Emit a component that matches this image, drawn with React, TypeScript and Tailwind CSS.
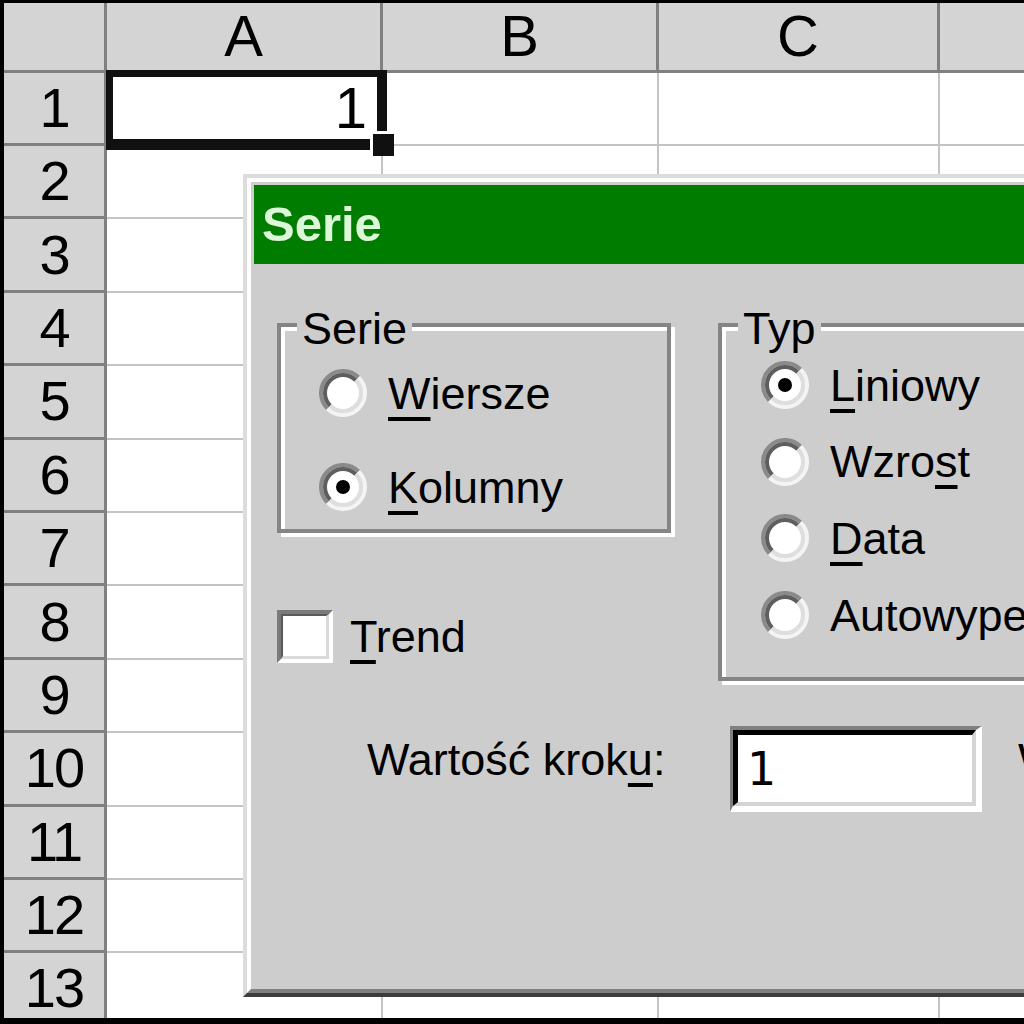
import type { ReactNode } from 'react'

const cols = [
	{ label: 'A', w: 'w-[276px]' },
	{ label: 'B', w: 'w-[276px]' },
	{ label: 'C', w: 'w-[281px]' },
	{ label: '', w: 'w-[277px]' },
]

const rows = [1, 2, 3, 4, 5, 6, 7, 8, 9, 10, 11, 12, 13]

const Key = ({ children }: { children: ReactNode }) => (
	<u className="underline decoration-[4px] underline-offset-[8px]">{children}</u>
)

const RadioDot = ({ checked }: { checked?: boolean }) => (
	<svg width="48" height="48" viewBox="0 0 48 48" className="flex-none">
		<circle cx="24" cy="24" r="20" fill="#fff" />
		<path d="M8.44 39.56 A22 22 0 0 1 39.56 8.44" fill="none" stroke="#8a8a8a" strokeWidth="4" />
		<path d="M39.56 8.44 A22 22 0 0 1 8.44 39.56" fill="none" stroke="#f4f4f4" strokeWidth="4" />
		<path d="M11.27 36.73 A18 18 0 0 1 36.73 11.27" fill="none" stroke="#5e5e5e" strokeWidth="4" />
		<path d="M36.73 11.27 A18 18 0 0 1 11.27 36.73" fill="none" stroke="#dedede" strokeWidth="4" />
		{checked && <circle cx="24" cy="24" r="7" fill="#000" />}
	</svg>
)

const Radio = ({ checked, children }: { checked?: boolean; children: ReactNode }) => (
	<div className="flex h-[48px] items-center">
		<RadioDot checked={checked} />
		<span className="ml-[21px] whitespace-nowrap text-[45px] leading-none">{children}</span>
	</div>
)

const Group = ({ legend, className, children }: { legend: string; className: string; children: ReactNode }) => (
	<div
		className={`relative flex-none border-4 border-[#858585] shadow-[inset_4px_4px_0_#fff,4px_4px_0_#fff] ${className}`}
	>
		<span className="absolute left-[16px] top-[-21px] bg-[#cdcdcd] px-[5px] text-[45px] leading-none">
			{legend}
		</span>
		{children}
	</div>
)

export default function App() {
	return (
		<div className="relative h-[1024px] w-[1024px] overflow-hidden border-b-[6px] border-l-4 border-t-[3px] border-black bg-white font-['Liberation_Sans',Arial,sans-serif] text-black">
			{/* column headers */}
			<div className="flex h-[69.6px] border-b-[3px] border-[#808080] bg-[#d4d4d4]">
				<div className="w-[103px] flex-none border-r-[3px] border-[#808080]" />
				{cols.map((c, i) => (
					<div
						key={i}
						className={`${c.w} flex flex-none items-center justify-center border-r-[3px] border-[#808080] text-[58px] leading-none`}
					>
						{c.label}
					</div>
				))}
			</div>

			{/* rows */}
			{rows.map((r) => (
				<div key={r} className="flex h-[73.4px]">
					<div className="flex w-[103px] flex-none items-center justify-center border-b-[3px] border-r-[3px] border-[#808080] bg-[#d4d4d4] text-[56px] leading-none tracking-[-2px]">
						{r}
					</div>
					{cols.map((c, i) => (
						<div
							key={i}
							className={`${c.w} flex flex-none items-center justify-end border-b-2 border-r-2 border-[#c4c4c4] pr-[14px] text-[58px] leading-none`}
						>
							{r === 1 && i === 0 ? '1' : ''}
						</div>
					))}
				</div>
			))}

			{/* active cell */}
			<div className="absolute left-[102px] top-[67px] h-[80px] w-[281px] border-b-[11px] border-l-[7px] border-r-[10px] border-t-[7px] border-[#101010]" />
			<div className="absolute left-[366px] top-[128px] h-[25px] w-[24px] border-l-[3px] border-t-[3px] border-white bg-[#101010]" />

			{/* Serie dialog */}
			<div className="absolute left-[239px] top-[171px] h-[823px] w-[900px] border-b-4 border-l-4 border-t-4 border-[#dcdcdc] border-b-[#3c3c3c] bg-[#cdcdcd]">
				<div className="flex h-full flex-col border-b-4 border-l-4 border-t-4 border-white border-b-[#808080] p-[3px] pr-0">
					<div className="flex h-[79px] flex-none items-center bg-[#007c00] pl-[8px] text-[49px] font-bold leading-none text-[#dcf8d8]">
						Serie
					</div>

					<div className="flex flex-1 flex-col pl-[23px] pt-[59px]">
						<div className="flex items-start">
							<div className="flex flex-none flex-col">
								<Group legend="Serie" className="h-[210px] w-[394px] pl-[38px] pt-[42px]">
									<div className="flex flex-col gap-[46px]">
										<Radio>
											<Key>W</Key>iersze
										</Radio>
										<Radio checked>
											<Key>K</Key>olumny
										</Radio>
									</div>
								</Group>

								<div className="mt-[77px] flex items-center">
									<div className="h-[53px] w-[56px] flex-none border-b-4 border-l-4 border-r-4 border-t-4 border-[#7a7a7a] border-b-white border-r-white">
										<div className="h-full w-full border-b-[3px] border-l-2 border-r-[3px] border-t-2 border-[#5a5a5a] border-b-[#dadada] border-r-[#dadada] bg-white" />
									</div>
									<span className="ml-[17px] text-[45px] leading-none">
										<Key>T</Key>rend
									</span>
								</div>
							</div>

							<Group legend="Typ" className="ml-[47px] h-[358px] w-[420px] pl-[39px] pt-[34px]">
								<div className="flex flex-col gap-[28.7px]">
									<Radio checked>
										<Key>L</Key>iniowy
									</Radio>
									<Radio>
										Wzro<Key>s</Key>t
									</Radio>
									<Radio>
										<Key>D</Key>ata
									</Radio>
									<Radio>Autowypełnianie</Radio>
								</div>
							</Group>
						</div>

						<div className="mt-[45px] flex items-start">
							<span className="ml-[90px] mt-[11px] w-[363px] flex-none whitespace-nowrap text-[45px] leading-none">
								Wartość krok<Key>u</Key>:
							</span>
							<div className="h-[86px] w-[252px] flex-none border-b-[6px] border-l-[3px] border-r-[6px] border-t-4 border-[#808080] border-b-white border-r-white">
								<div className="flex h-full items-center border-b-4 border-l-[5px] border-r-4 border-t-[5px] border-black border-b-[#d4d4d4] border-r-[#d4d4d4] bg-white pl-[9px] font-['DejaVu_Sans',sans-serif] text-[46px] leading-none">
									1
								</div>
							</div>
							<span className="ml-[36px] mt-[11px] flex-none whitespace-nowrap text-[45px] leading-none">
								Wartość końcowa:
							</span>
						</div>
					</div>
				</div>
			</div>
		</div>
	)
}
